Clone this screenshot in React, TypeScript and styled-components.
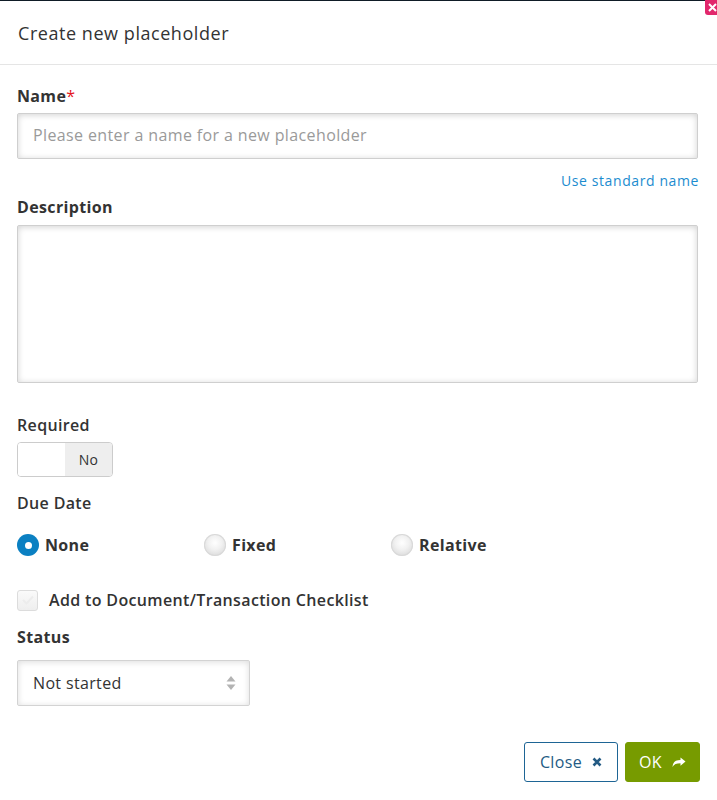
import React from 'react'
import styled, { createGlobalStyle } from 'styled-components'

const GlobalStyle = createGlobalStyle`
  html, body {
    margin: 0;
    padding: 0;
    background: #ffffff;
  }
  body {
    font-family: 'Open Sans', 'Noto Sans', sans-serif;
    color: #333333;
    letter-spacing: 0.35px;
  }
  * { box-sizing: border-box; }
`

const Modal = styled.div`
  position: relative;
  width: 717px;
  height: 800px;
  background: #ffffff;
  border-top: 1px solid #0f1c26;
`

const CornerClose = styled.div`
  position: absolute;
  top: -1px;
  right: 0;
  width: 12px;
  height: 15px;
  background: #e2276c;
  border-bottom-left-radius: 3px;
  display: flex;
  align-items: center;
  justify-content: flex-end;
  overflow: hidden;
`

const Header = styled.div`
  height: 64px;
  display: flex;
  align-items: center;
  padding: 0 18px;
  border-bottom: 1px solid #e5e5e5;
`

const Title = styled.h4`
  margin: 0;
  font-size: 18px;
  font-weight: 400;
  letter-spacing: 0.55px;
  color: #333333;
`

const Body = styled.div`
  padding: 20px 19px 0 17px;
`

const Label = styled.div<{ $bold?: boolean; $gap?: number; $mb?: number }>`
  font-size: 16px;
  font-weight: ${({ $bold }) => ($bold ? 700 : 600)};
  line-height: 22px;
  color: #333333;
  margin-top: ${({ $gap }) => $gap ?? 0}px;
  margin-bottom: ${({ $mb }) => $mb ?? 6}px;
`

const Star = styled.span`
  color: #e4141b;
  font-weight: 400;
`

const TextInput = styled.input`
  display: block;
  width: 100%;
  height: 46px;
  padding: 0 15px 2px;
  border: 1px solid #cfcfcf;
  border-radius: 2px;
  box-shadow: inset 0 1px 6px rgba(0, 0, 0, 0.18);
  font-family: 'Open Sans', sans-serif;
  font-size: 16px;
  letter-spacing: 0.38px;
  color: #333;
  outline: none;
  &::placeholder {
    color: #9a9a9a;
  }
`

const LinkRow = styled.div`
  display: flex;
  justify-content: flex-end;
  margin-top: 12px;
  margin-right: -1px;
`

const Link = styled.a`
  font-size: 14px;
  letter-spacing: 0.6px;
  color: #1b8ccf;
  text-decoration: none;
  line-height: 20px;
`

const TextArea = styled.textarea`
  display: block;
  width: 100%;
  height: 158px;
  border: 1px solid #cfcfcf;
  border-radius: 2px;
  box-shadow: inset 0 1px 6px rgba(0, 0, 0, 0.18);
  resize: none;
  outline: none;
  font-family: 'Open Sans', sans-serif;
  font-size: 16px;
`

const Toggle = styled.div`
  display: flex;
  width: 96px;
  height: 35px;
  border: 1px solid #cccccc;
  border-radius: 4px;
  overflow: hidden;
  margin-bottom: 15px;
`

const ToggleHalf = styled.div<{ $off?: boolean }>`
  flex: 1;
  display: flex;
  align-items: center;
  justify-content: center;
  font-size: 14px;
  color: #333;
  background: ${({ $off }) => ($off ? '#eeeeee' : '#ffffff')};
`

const RadioRow = styled.div`
  display: grid;
  grid-template-columns: 187px 187px 187px;
  margin-top: 20px;
  margin-bottom: 33px;
`

const RadioItem = styled.label`
  display: flex;
  align-items: center;
  gap: 6px;
  font-size: 16px;
  font-weight: 700;
  color: #333333;
  height: 22px;
`

const RadioDot = styled.span<{ $checked?: boolean }>`
  width: 22px;
  height: 22px;
  border-radius: 50%;
  flex-shrink: 0;
  display: flex;
  align-items: center;
  justify-content: center;
  background: ${({ $checked }) =>
    $checked
      ? '#0b80c2'
      : 'radial-gradient(circle at 50% 40%, #ffffff 0%, #f1f1f1 40%, #cfcfcf 100%)'};
  box-shadow: ${({ $checked }) => ($checked ? 'none' : 'inset 0 0 0 1px #d9d9d9')};
  &::after {
    content: '';
    display: ${({ $checked }) => ($checked ? 'block' : 'none')};
    width: 7px;
    height: 7px;
    border-radius: 50%;
    background: #ffffff;
  }
`

const CheckRow = styled.label`
  display: flex;
  align-items: center;
  gap: 11px;
  font-size: 16px;
  font-weight: 600;
  color: #333;
  margin-bottom: 15px;
`

const CheckBox = styled.span`
  width: 21px;
  height: 21px;
  border: 1px solid #dcdcdc;
  border-radius: 3px;
  background: linear-gradient(#fafafa, #eeeeee);
  display: flex;
  align-items: center;
  justify-content: center;
`

const Select = styled.div`
  width: 233px;
  height: 46px;
  border: 1px solid #d3d3d3;
  border-radius: 2px;
  box-shadow: inset 0 1px 6px rgba(0, 0, 0, 0.14);
  display: flex;
  align-items: center;
  justify-content: space-between;
  padding: 0 13px 0 15px;
  font-size: 16px;
  color: #333;
`

const Footer = styled.div`
  display: flex;
  justify-content: flex-end;
  gap: 7px;
  padding: 36px 17px 0 0;
`

const Button = styled.button<{ $primary?: boolean }>`
  height: 40px;
  display: flex;
  align-items: center;
  gap: 10px;
  padding: ${({ $primary }) => ($primary ? '0 13px 0 13px' : '0 15px 0 15px')};
  border-radius: 3px;
  font-family: 'Open Sans', sans-serif;
  font-size: 16px;
  letter-spacing: 0.35px;
  cursor: pointer;
  border: 1px solid ${({ $primary }) => ($primary ? '#769b00' : '#1e6595')};
  background: ${({ $primary }) => ($primary ? '#779b00' : '#ffffff')};
  color: ${({ $primary }) => ($primary ? '#ffffff' : '#245b84')};
`

const App = () => (
  <>
    <GlobalStyle />
    <Modal>
      <CornerClose>
        <svg width="10" height="10" viewBox="0 0 10 10">
          <path d="M2 8 L9 1 M2 1 L9 8" stroke="#fff" strokeWidth="2" />
        </svg>
      </CornerClose>
      <Header>
        <Title>Create new placeholder</Title>
      </Header>
      <Body>
        <Label $bold>
          Name<Star>*</Star>
        </Label>
        <TextInput placeholder="Please enter a name for a new placeholder" />
        <LinkRow>
          <Link href="#">Use standard name</Link>
        </LinkRow>
        <Label $bold $gap={5} $mb={7}>
          Description
        </Label>
        <TextArea />

        <Label $gap={31}>Required</Label>
        <Toggle>
          <ToggleHalf />
          <ToggleHalf $off>No</ToggleHalf>
        </Toggle>

        <Label>Due Date</Label>
        <RadioRow>
          <RadioItem>
            <RadioDot $checked />
            None
          </RadioItem>
          <RadioItem>
            <RadioDot />
            Fixed
          </RadioItem>
          <RadioItem>
            <RadioDot />
            Relative
          </RadioItem>
        </RadioRow>

        <CheckRow>
          <CheckBox>
            <svg width="12" height="10" viewBox="0 0 12 10">
              <path d="M1 5 L4.5 8.5 L11 1.5" fill="none" stroke="#ececec" strokeWidth="2" />
            </svg>
          </CheckBox>
          Add to Document/Transaction Checklist
        </CheckRow>

        <Label $bold $mb={12}>
          Status
        </Label>
        <Select>
          <span>Not started</span>
          <svg width="10" height="16" viewBox="0 0 10 16">
            <path d="M5 1 L9.5 6.5 H0.5 Z" fill="#b3b3b3" />
            <path d="M5 15 L9.5 9.5 H0.5 Z" fill="#b3b3b3" />
          </svg>
        </Select>
      </Body>
      <Footer>
        <Button>
          Close
          <svg width="10" height="10" viewBox="0 0 10 10">
            <path d="M1.5 1.5 L8.5 8.5 M8.5 1.5 L1.5 8.5" stroke="#245b84" strokeWidth="2.6" />
          </svg>
        </Button>
        <Button $primary>
          OK
          <svg width="14" height="11" viewBox="0 0 14 11">
            <path
              d="M13.5 4.5 L8.5 0.5 V3 C4 3 1 4.5 0.5 10 C2 7.3 4.5 6.3 8.5 6.3 V8.8 Z"
              fill="#ffffff"
            />
          </svg>
        </Button>
      </Footer>
    </Modal>
  </>
)

export default App
